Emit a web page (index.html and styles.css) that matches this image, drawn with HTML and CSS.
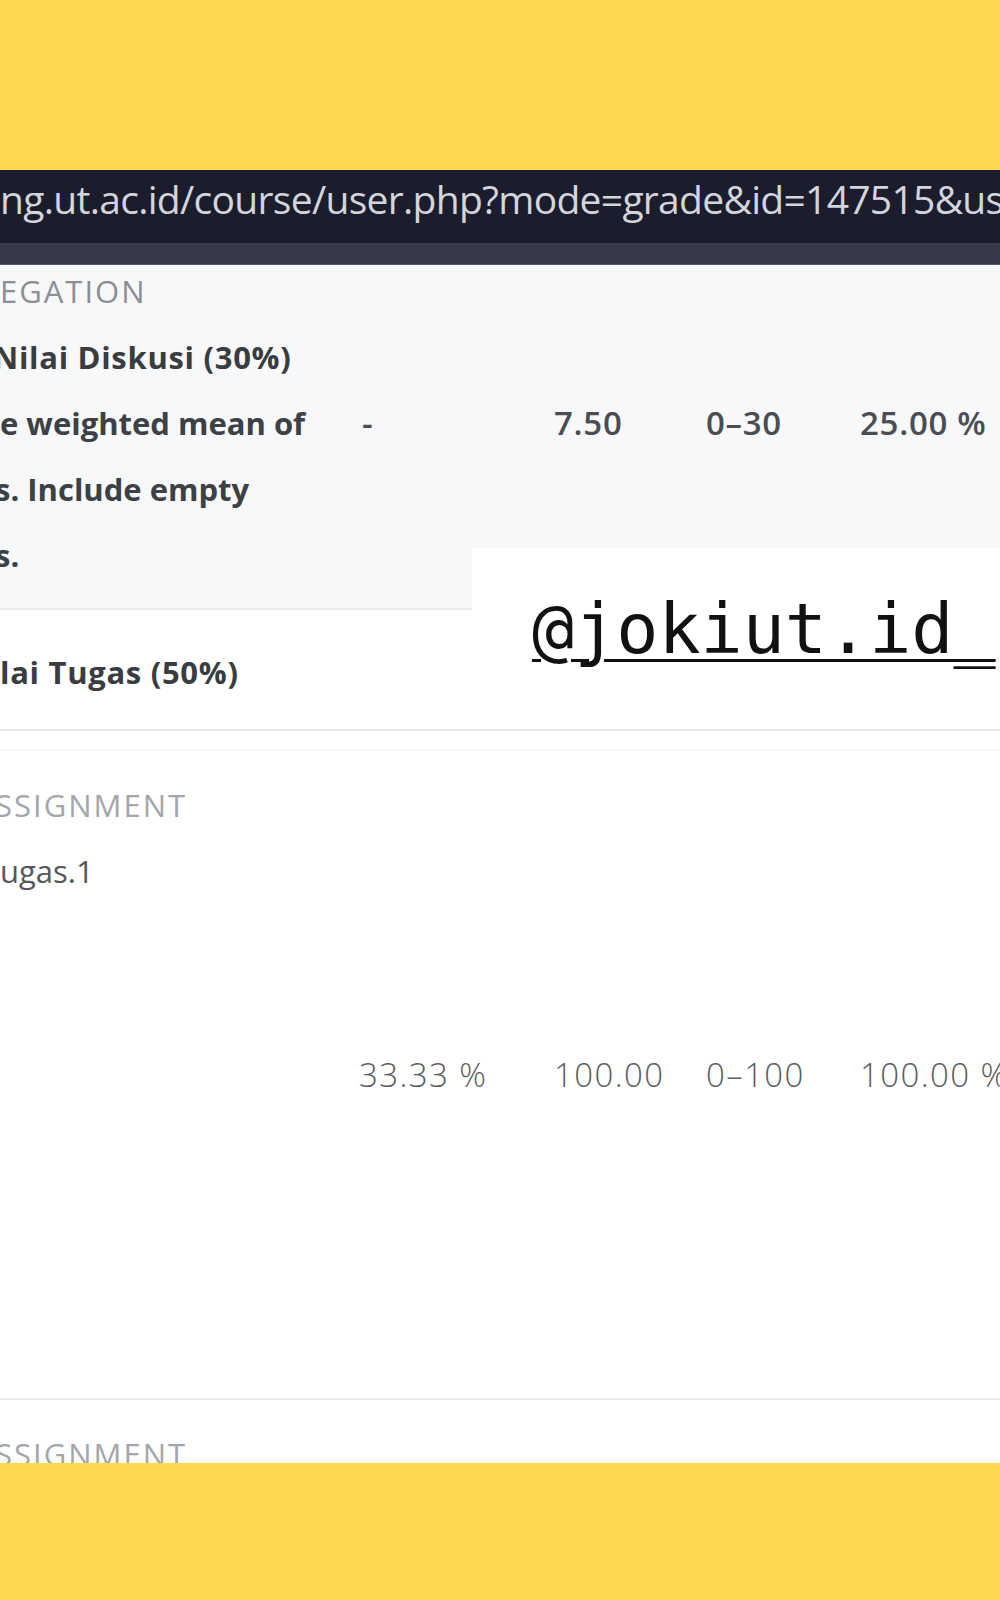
FILE: index.html
```html
<!DOCTYPE html>
<html lang="id">
<head>
<meta charset="utf-8">
<title>Grade report</title>
<link rel="stylesheet" href="styles.css">
</head>
<body>
<div class="frame">
  <div class="band band-top"></div>
  <div class="browser">
    <div class="urlbar"><span class="url">ng.ut.ac.id/course/user.php?mode=grade&amp;id=147515&amp;use</span></div>
    <div class="toolstrip"></div>
  </div>
  <div class="report">
    <div class="cat">
      <div class="c1 label">EGATION</div>
      <div class="c1 title cut6">Nilai Diskusi (30%)</div>
      <div class="c1 desc">e weighted mean of</div>
      <div class="c2 val">-</div>
      <div class="c3 val">7.50</div>
      <div class="c4 val">0–30</div>
      <div class="c5 val">25.00 %</div>
      <div class="c1 desc cut4">s. Include empty</div>
      <div class="c1 desc cut4">s.</div>
    </div>
    <div class="sub">
      <div class="title">lai Tugas (50%)</div>
    </div>
    <div class="item">
      <div class="c1 item-head">
        <div class="label light cut4">SSIGNMENT</div>
        <div class="name">ugas.1</div>
      </div>
      <div class="c2 num">33.33 %</div>
      <div class="c3 num">100.00</div>
      <div class="c4 num">0–100</div>
      <div class="c5 num">100.00 %</div>
    </div>
    <div class="item next">
      <div class="c1 item-head">
        <div class="label light cut4">SSIGNMENT</div>
      </div>
    </div>
  </div>
  <div class="band band-bottom"></div>
</div>
<div class="watermark"><span class="handle">@jokiut.id_</span></div>
</body>
</html>
```

FILE: styles.css
```css
html, body {
  margin: 0;
  padding: 0;
}
body {
  width: 1000px;
  height: 1600px;
  overflow: hidden;
  background: #fed94f;
  position: relative;
  font-family: "Open Sans", "Noto Sans", sans-serif;
}
.frame {
  display: flex;
  flex-direction: column;
  height: 1600px;
}
.band {
  background: #fed94f;
  flex: none;
}
.band-top { height: 170px; }
.band-bottom { height: 137px; }

.browser { flex: none; }
.urlbar {
  height: 73px;
  background: #1b1d2c;
  display: flex;
  align-items: center;
  overflow: hidden;
  white-space: nowrap;
}
.url {
  font-family: "Open Sans", "Noto Sans", sans-serif;
  font-size: 39px;
  color: #d3d5dc;
  letter-spacing: -0.7px;
  padding-bottom: 16px;
}
.toolstrip {
  height: 21px;
  background: #363949;
  border-bottom: 1px solid #55586a;
}

.report {
  flex: 1;
  overflow: hidden;
  background: #ffffff;
  color: #3a3d41;
}

.cat, .item {
  display: grid;
  grid-template-columns: 359px 195px 152px 154px 1fr;
}
.cat {
  background: #f7f8fa;
  height: 345px;
  box-sizing: border-box;
  border-bottom: 2px solid #e9eaec;
  align-content: start;
}
.c1 { grid-column: 1; white-space: nowrap; }
.c2 { grid-column: 2; }
.c3 { grid-column: 3; }
.c4 { grid-column: 4; }
.c5 { grid-column: 5; white-space: nowrap; }

.label {
  font-size: 31px;
  line-height: 52px;
  color: #8b8e93;
  letter-spacing: 2px;
  margin-bottom: 7px;
}
.label.light {
  color: #a3a6aa;
  line-height: 66px;
  margin-bottom: 0;
  font-weight: 400;
}
.title {
  font-size: 31px;
  font-weight: 700;
  line-height: 66px;
  color: #393c40;
  letter-spacing: 0.7px;
  white-space: nowrap;
}
.desc {
  font-size: 31px;
  font-weight: 700;
  line-height: 66px;
  color: #3d4044;
}
.cut6 { margin-left: -7px; }
.cut4 { margin-left: -5px; }
.val {
  grid-row: 3;
  font-family: "Open Sans", "Noto Sans", sans-serif;
  font-size: 33px;
  font-weight: 600;
  line-height: 66px;
  color: #4a4d51;
  letter-spacing: 0.7px;
  white-space: nowrap;
}
.c2.val { padding-left: 3px; }

.sub {
  height: 121px;
  box-sizing: border-box;
  padding-top: 29px;
  border-bottom: 2px solid #e6e7e9;
  margin-bottom: 19px;
}
.item {
  border-top: 1px solid #eef0f2;
  height: 650px;
  box-sizing: border-box;
  border-bottom: 2px solid #ececee;
  align-items: center;
}
.item-head {
  align-self: start;
  padding-top: 21px;
}
.name {
  font-size: 31px;
  line-height: 66px;
  color: #55585c;
}
.num {
  font-family: "Open Sans", "Noto Sans", sans-serif;
  font-size: 33px;
  font-weight: 300;
  color: #5a5d61;
  letter-spacing: 1.4px;
  white-space: nowrap;
}
.item.next {
  border: none;
  height: auto;
}
.item.next .item-head { padding-top: 21px; }

.watermark {
  position: absolute;
  left: 472px;
  top: 548px;
  width: 528px;
  height: 150px;
  background: #ffffff;
}
.handle {
  position: absolute;
  left: 60px;
  top: 36px;
  font-family: "DejaVu Sans Mono", "Liberation Mono", monospace;
  font-size: 70px;
  line-height: 90px;
  color: #111111;
  text-decoration: underline;
  text-decoration-thickness: 3px;
  text-underline-offset: 6px;
  white-space: nowrap;
}
```
